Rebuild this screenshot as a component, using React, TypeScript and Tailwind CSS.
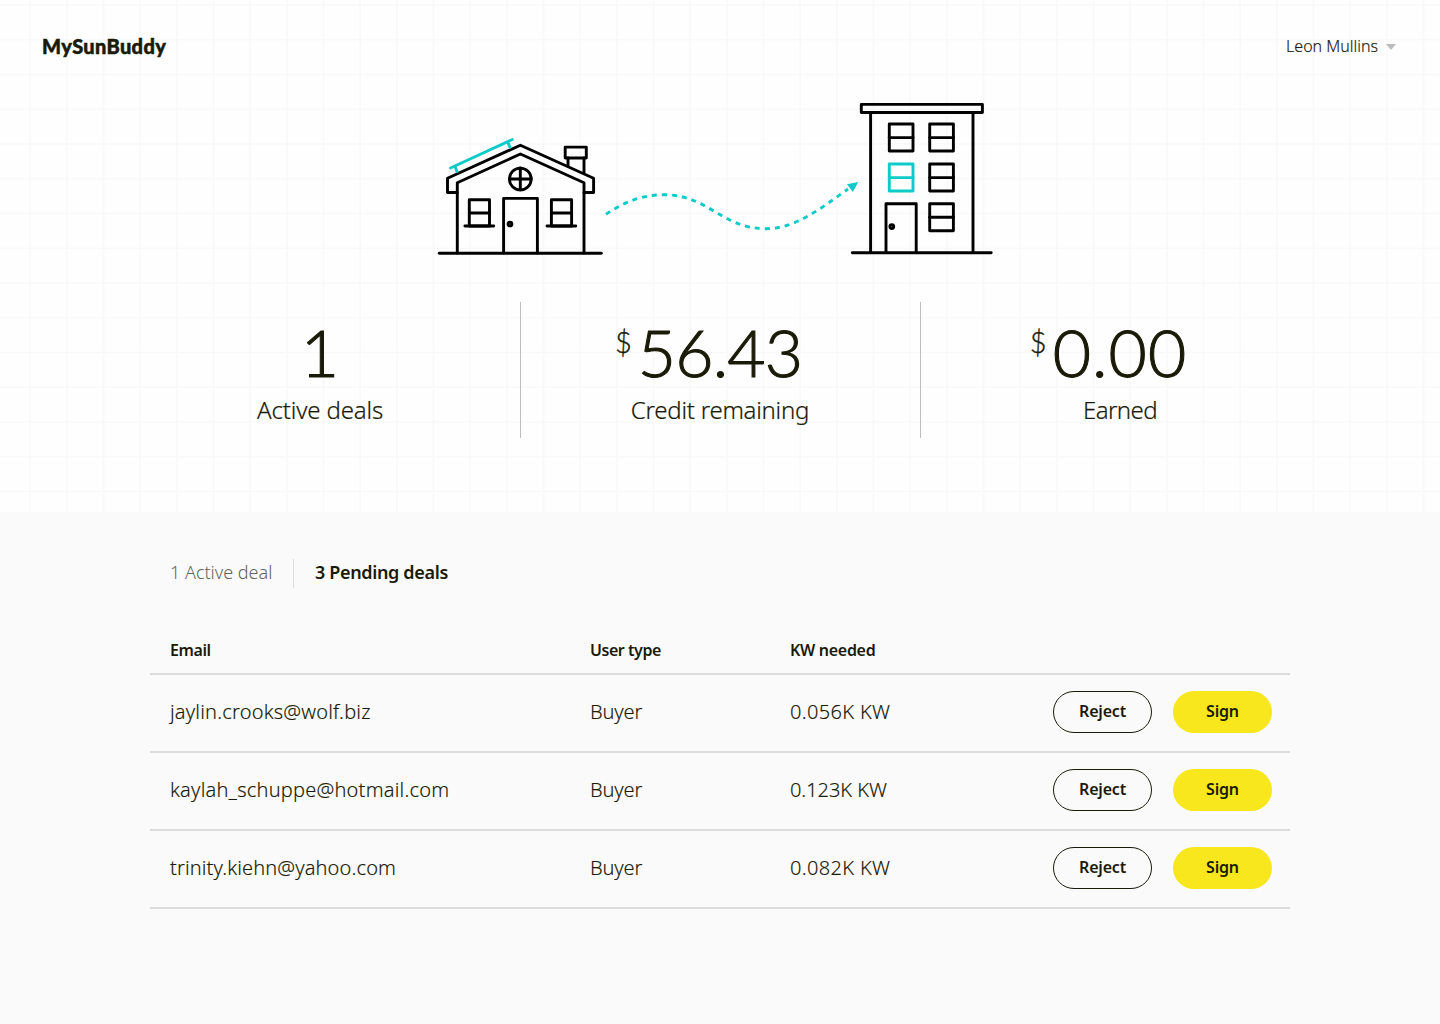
import type { ReactNode } from "react";

const deals = [
  { email: "jaylin.crooks@wolf.biz", type: "Buyer", kw: "0.056K KW", emailClass: "tracking-[0.2px]", kwClass: "tracking-[0.35px]" },
  { email: "kaylah_schuppe@hotmail.com", type: "Buyer", kw: "0.123K KW", emailClass: "tracking-[0.22px]", kwClass: "tracking-[-0.05px]" },
  { email: "trinity.kiehn@yahoo.com", type: "Buyer", kw: "0.082K KW", emailClass: "tracking-[0.13px]", kwClass: "tracking-[0.35px]" },
];

const columns = Array.from({ length: 39 }, (_, i) => 30.2 + i * 36.667);
const rows = Array.from({ length: 15 }, (_, i) => 5 + i * 34.75);

function GridBackdrop() {
  return (
    <svg className="absolute inset-0 -z-10" width="1440" height="512" stroke="#f9f9f9" strokeWidth="1.7">
      {columns.map((x) => (
        <path key={`c${x}`} d={`M${x} 0V512`} />
      ))}
      {rows.map((y) => (
        <path key={`r${y}`} d={`M0 ${y}H1440`} />
      ))}
    </svg>
  );
}

function Pane({ x, y }: { x: number; y: number }) {
  return (
    <>
      <rect x={x} y={y} width="23.7" height="27" />
      <path d={`M${x} ${y + 13.6}h23.7`} />
    </>
  );
}

function HouseWindow({ x }: { x: number }) {
  return (
    <>
      <rect x={x} y="199.7" width="20.2" height="26.3" />
      <path d={`M${x} 213h20.2M${x - 4.4} 226h28.8`} />
    </>
  );
}

function Illustration() {
  return (
    <svg
      className="block"
      width="560"
      height="160"
      viewBox="435 98 560 160"
      fill="none"
      stroke="#000"
      strokeWidth="2.9"
      strokeLinecap="round"
      strokeLinejoin="round"
    >
      <path d="M439.3 253.2H601.3" />
      <path d="M457.3 253V182.8L520.4 154L584 182.8V253" />
      <path d="M457.3 192.5H447.5V178.2L520.4 145.2L593.6 178.2V192.5H584" />
      <rect x="565.2" y="147.1" width="21.1" height="10.9" />
      <path d="M568 158V166M584 158V173" />
      <circle cx="520.3" cy="179" r="10.9" />
      <path d="M520.3 168V190M509.4 179H531.2" />
      <path d="M503.6 253V198.4H537.4V253" />
      <circle cx="510" cy="224" r="1.9" />
      <HouseWindow x={469.3} />
      <HouseWindow x={551.4} />

      <g stroke="#0dcbc9">
        <path d="M450.5 168L512.3 139.5M455 166.5L457 171.6M507.7 142L510 147.3" />
        <path
          d="M606 214.3C623 202.5 642 194.7 664 194.7C708 194.7 722 228.7 766 228.7C795 228.7 820 209 848 189"
          strokeLinecap="butt"
          strokeDasharray="5 5"
        />
      </g>
      <path d="M858.3 182L852.8 192L847 184.2Z" fill="#0dcbc9" stroke="none" />

      <path d="M852.3 252.8H991.2" />
      <path d="M870.6 252V112.5M973 112.5V252" />
      <rect x="861.3" y="104.4" width="121.1" height="8.1" />
      <Pane x={889.3} y={124} />
      <Pane x={929.7} y={124} />
      <g stroke="#0dcbc9">
        <Pane x={889.3} y={164} />
      </g>
      <Pane x={929.7} y={164} />
      <Pane x={929.7} y={203.7} />
      <path d="M886 252V203.7H916.2V252" />
      <circle cx="891.8" cy="226.6" r="1.9" />
    </svg>
  );
}

function Stat({ currency, label, children }: { currency?: boolean; label: ReactNode; children: ReactNode }) {
  return (
    <div className="flex h-[136px] w-[400px] flex-col items-center">
      <div className="relative mt-4 h-[68px] font-['Lato',sans-serif] text-[66px] leading-[68px] font-light [-webkit-text-stroke:1.1px_#1a1a08]">
        {currency && (
          <span className="absolute top-2 right-full mr-[6px] text-[29px] leading-8 [-webkit-text-stroke:0.4px_#1a1a08]">
            $
          </span>
        )}
        {children}
      </div>
      <div className="mt-2 text-2xl leading-8 [-webkit-text-stroke:0.2px_#1a1a08]">{label}</div>
    </div>
  );
}

export default function App() {
  return (
    <div className="flex h-[1024px] w-[1440px] flex-col bg-[#fafafa] font-['Noto_Sans',sans-serif] font-light text-[#1a1a08]">
      <section className="relative isolate flex h-[512px] flex-col items-center bg-[#fefefe]">
        <GridBackdrop />
        <header className="flex h-[98px] w-full items-start justify-between pr-11 pl-[42px]">
          <div className="mt-8 font-['Lato',sans-serif] text-xl leading-7 font-black tracking-[0.35px] [-webkit-text-stroke:0.5px_#1a1a08]">
            MySunBuddy
          </div>
          <button className="mt-8 flex items-center gap-2 text-base leading-7">
            <span className="[-webkit-text-stroke:0.15px_#1a1a08]">Leon Mullins</span>
            <svg width="10" height="6" viewBox="0 0 10 6" className="mt-0.5">
              <path d="M0 0H10L5 6Z" fill="#bcbcbc" />
            </svg>
          </button>
        </header>
        <div className="-ml-[10px]">
          <Illustration />
        </div>
        <div className="mt-11 flex">
          <Stat label={<span className="tracking-[-0.15px]">Active deals</span>}>1</Stat>
          <div className="-mr-px w-px bg-[#bdbdbd]" />
          <Stat currency label={<span className="tracking-[-0.25px]">Credit remaining</span>}>
            <span className="tracking-[-0.8px]">56.43</span>
          </Stat>
          <div className="-mr-px w-px bg-[#bdbdbd]" />
          <Stat currency label={<span className="tracking-[-0.6px]">Earned</span>}>
            <span className="tracking-[1.1px]">0.00</span>
          </Stat>
        </div>
      </section>

      <main className="mx-auto w-[1140px] pt-[47px]">
        <nav className="flex h-[29px] items-center px-5 text-lg leading-7">
          <button className="w-[123px] pb-[3px] text-left text-[#65655a]">1 Active deal</button>
          <div className="h-full w-px bg-[#dcdcdc]" />
          <button className="ml-[21px] pb-[3px] font-semibold tracking-[-0.35px] text-[#1a1a08]">3 Pending deals</button>
        </nav>

        <div className="mt-[39px] flex h-12 items-center border-b-2 border-[#dcdcdc] pl-5 text-base font-semibold">
          <div className="w-[420px] tracking-[-0.4px]">Email</div>
          <div className="w-[200px] tracking-[-0.45px]">User type</div>
          <div className="tracking-[-0.3px]">KW needed</div>
        </div>
        {deals.map((d) => (
          <div
            key={d.email}
            className="flex h-[78px] items-center border-b-2 border-[#dcdcdc] pr-[18px] pb-[2px] pl-5 text-xl [-webkit-text-stroke:0.15px_#1a1a08]"
          >
            <div className={`w-[420px] ${d.emailClass}`}>{d.email}</div>
            <div className="w-[200px] tracking-[-0.15px]">{d.type}</div>
            <div className={`flex-1 ${d.kwClass}`}>{d.kw}</div>
            <div className="flex gap-[21px] text-base font-semibold tracking-[-0.2px] [-webkit-text-stroke:0]">
              <button className="h-[42px] w-[99px] rounded-full border border-[#1a1a08] pb-0.5">Reject</button>
              <button className="h-[42px] w-[99px] rounded-full bg-[#f8e71c] pb-0.5">Sign</button>
            </div>
          </div>
        ))}
      </main>
    </div>
  );
}
